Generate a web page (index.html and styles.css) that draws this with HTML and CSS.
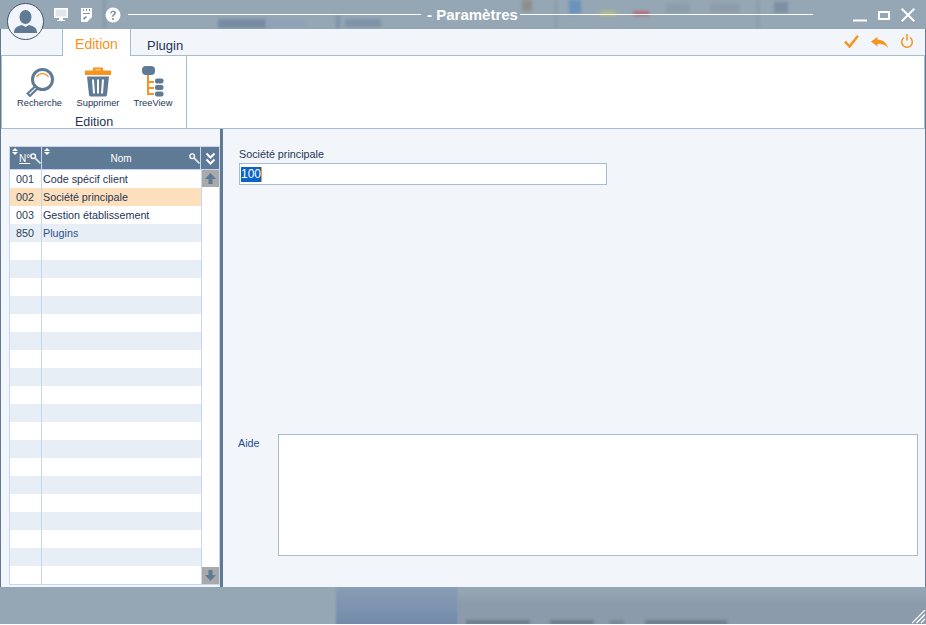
FILE: index.html
```html
<!DOCTYPE html>
<html lang="fr">
<head>
<meta charset="utf-8">
<title>Paramètres</title>
<link rel="stylesheet" href="styles.css">
</head>
<body>
<div class="backdrop">
  <span class="blur b1"></span><span class="blur b2"></span><span class="blur b3"></span><span class="blur b4"></span>
  <span class="blur b5"></span><span class="blur b6"></span><span class="blur b7"></span><span class="blur b8"></span>
  <span class="blur b9"></span><span class="blur b10"></span><span class="blur b11"></span><span class="blur b12"></span>
  <span class="blur b13"></span><span class="blur b14"></span><span class="blur b15"></span><span class="blur b16"></span>
  <span class="blur b17"></span><span class="blur b18"></span><span class="blur b19"></span><span class="blur b20"></span>
</div>
<div class="window">
  <header class="titlebar">
    <div class="avatar">
      <svg width="37" height="37" viewBox="0 0 37 37"><circle cx="18.500" cy="18.500" r="17.500" fill="#f1f5fb" stroke="#fff" stroke-width="1"/><circle cx="18.500" cy="18.500" r="18" fill="none" stroke="#3f566c" stroke-width="1"/><ellipse cx="18.500" cy="14" rx="6" ry="7" fill="#5f7a94"/><path d="M7 30c0-5 3-7 8-8l3.500 2 3.500-2c5 1 8 3 8 8z" fill="#5f7a94"/></svg>
    </div>
    <div class="quick">
      <svg width="16" height="16" viewBox="0 0 16 16"><path d="M1 1h14v10H1z" fill="#fff"/><path d="M2.500 2.500h11v7h-11z" fill="#dfe6ec"/><path d="M6 11h4v2h2v1H4v-1h2z" fill="#fff"/></svg>
      <svg width="12" height="16" viewBox="0 0 12 16"><path d="M0 1h11v9l-5 5H0z" fill="#fff"/><path d="M2 2h1v2H2zM5 2h1v2H5zM8 2h1v2H8zM2 6h7v1H2zM2 11l3-2 1 1-3 3z" fill="#7f93a6"/></svg>
      <svg width="16" height="16" viewBox="0 0 16 16"><circle cx="8" cy="8" r="7.500" fill="#fff"/><path d="M5.300 6.200C5.400 4.500 6.600 3.500 8.200 3.500c1.700 0 2.800 1 2.800 2.400 0 1.200-.8 1.800-1.500 2.300-.6.400-.8.700-.8 1.300v.3H7v-.5c0-1 .4-1.500 1.100-2 .6-.4.900-.7.900-1.200 0-.6-.4-1-1-1-.7 0-1 .4-1.100 1.100z" fill="#8a9cac"/><rect x="7" y="11" width="1.900" height="1.900" fill="#8a9cac"/></svg>
    </div>
    <div class="title-wrap">
      <span class="rule"></span>
      <span class="title">- Paramètres</span>
      <span class="rule"></span>
    </div>
    <div class="winctl">
      <svg width="14" height="14" viewBox="0 0 14 14"><path d="M0 12.500h14" stroke="#fff" stroke-width="2"/></svg>
      <svg width="12" height="14" viewBox="0 0 12 14"><path d="M1 4h10v7H1z" fill="none" stroke="#fff" stroke-width="2"/></svg>
      <svg width="14" height="14" viewBox="0 0 14 14"><path d="M.7.700l12.600 12.600M13.300.700L.7 13.300" stroke="#fff" stroke-width="2"/></svg>
    </div>
  </header>

  <div class="app">
    <nav class="tabs">
      <div class="tab tab-active">Edition</div>
      <div class="tab">Plugin</div>
      <div class="actions">
        <svg width="15" height="13" viewBox="0 0 15 13"><path d="M1 6.500l4.500 5L14 .8" fill="none" stroke="#f7931e" stroke-width="2.500"/></svg>
        <svg class="act-back" width="17" height="11" viewBox="0 0 17 11"><path d="M0 4.500L6.500 0v2.700c5 0 9 2.300 10.500 8.300-2.500-3.500-6-4.500-10.500-4.300V9.500z" fill="#f7931e"/></svg>
        <svg width="14" height="14" viewBox="0 0 14 14"><path d="M4 3.500a5.300 5.300 0 1 0 6 0" fill="none" stroke="#f7931e" stroke-width="1.500"/><path d="M7 0v6.500" stroke="#f7931e" stroke-width="1.500"/></svg>
      </div>
    </nav>

    <section class="ribbon">
      <div class="group">
        <div class="tools">
          <div class="tool">
            <svg width="29" height="31" viewBox="0 0 29 31"><circle cx="17.500" cy="13.500" r="10" fill="#fff" stroke="#5f7a94" stroke-width="3"/><path d="M11.500 11a7 7 0 0 1 12 0" fill="none" stroke="#f7931e" stroke-width="1.400"/><path d="M10 20.500L2.500 27.500l2.500 2.500 7.500-7.500z" fill="#e6ecf2" stroke="#5f7a94" stroke-width="2"/></svg>
            <span>Recherche</span>
          </div>
          <div class="tool tool-mid">
            <svg width="26" height="31" viewBox="0 0 26 31"><path d="M8 1.500h10v3h8v4.500H0V4.500h8z" fill="#f7931e"/><path d="M10.500 3h5v1.500h-5z" fill="#ffc680"/><path d="M2 10.500h22l-2 18.500a2 2 0 0 1-2 1.500H6a2 2 0 0 1-2-1.500z" fill="#5f7a94"/><path d="M8 13.500l1 14M13 13.500v14M18 13.500l-1 14" stroke="#fff" stroke-width="2"/></svg>
            <span>Supprimer</span>
          </div>
          <div class="tool tool-last">
            <svg width="24" height="31" viewBox="0 0 24 31"><rect x="1" y="0" width="13" height="9" rx="4" fill="#5f7a94"/><path d="M7 9v20M7 16h6M7 22h6M7 28h6" stroke="#f7931e" stroke-width="2" fill="none"/><rect x="14" y="12.500" width="8.500" height="5" rx="2" fill="#5f7a94"/><rect x="14" y="19" width="8.500" height="5" rx="2" fill="#5f7a94"/><rect x="14" y="25.500" width="8.500" height="5" rx="2" fill="#5f7a94"/></svg>
            <span>TreeView</span>
          </div>
        </div>
        <div class="group-label">Edition</div>
      </div>
    </section>

    <main class="content">
      <div class="list-panel">
        <div class="grid">
          <div class="grid-head">
            <div class="hd hd-code"><i class="sort"></i><span class="hd-n">N°</span><svg class="key" width="11" height="11" viewBox="0 0 11 11"><circle cx="3.200" cy="3.200" r="2.300" fill="none" stroke="#fff" stroke-width="1.400"/><path d="M5 5l5.500 5.500" stroke="#d9e0e7" stroke-width="1.800"/></svg></div>
            <div class="hd hd-name"><i class="sort"></i><span>Nom</span><svg class="key" width="11" height="11" viewBox="0 0 11 11"><circle cx="3.200" cy="3.200" r="2.300" fill="none" stroke="#fff" stroke-width="1.400"/><path d="M5 5l5.500 5.500" stroke="#d9e0e7" stroke-width="1.800"/></svg></div>
            <div class="hd hd-more"><svg width="11" height="13" viewBox="0 0 11 13"><path d="M1.500 1.500l4 4 4-4M1.500 7.500l4 4 4-4" fill="none" stroke="#fff" stroke-width="2"/></svg></div>
          </div>
          <div class="grid-body">
            <div class="rows">
              <div class="row"><span class="c1">001</span><span class="c2">Code spécif client</span></div>
              <div class="row row-sel"><span class="c1">002</span><span class="c2">Société principale</span></div>
              <div class="row"><span class="c1">003</span><span class="c2">Gestion établissement</span></div>
              <div class="row row-alt row-plugin"><span class="c1">850</span><span class="c2">Plugins</span></div>
              <div class="row"><span class="c1"></span><span class="c2"></span></div>
              <div class="row row-alt"><span class="c1"></span><span class="c2"></span></div>
              <div class="row"><span class="c1"></span><span class="c2"></span></div>
              <div class="row row-alt"><span class="c1"></span><span class="c2"></span></div>
              <div class="row"><span class="c1"></span><span class="c2"></span></div>
              <div class="row row-alt"><span class="c1"></span><span class="c2"></span></div>
              <div class="row"><span class="c1"></span><span class="c2"></span></div>
              <div class="row row-alt"><span class="c1"></span><span class="c2"></span></div>
              <div class="row"><span class="c1"></span><span class="c2"></span></div>
              <div class="row row-alt"><span class="c1"></span><span class="c2"></span></div>
              <div class="row"><span class="c1"></span><span class="c2"></span></div>
              <div class="row row-alt"><span class="c1"></span><span class="c2"></span></div>
              <div class="row"><span class="c1"></span><span class="c2"></span></div>
              <div class="row row-alt"><span class="c1"></span><span class="c2"></span></div>
              <div class="row"><span class="c1"></span><span class="c2"></span></div>
              <div class="row row-alt"><span class="c1"></span><span class="c2"></span></div>
              <div class="row"><span class="c1"></span><span class="c2"></span></div>
              <div class="row row-alt"><span class="c1"></span><span class="c2"></span></div>
              <div class="row"><span class="c1"></span><span class="c2"></span></div>
            </div>
            <div class="scroll">
              <div class="scroll-btn"><svg width="13" height="13" viewBox="0 0 13 13"><path d="M6.500 1L12 7H8.500v5h-4V7H1z" fill="#5f7a94"/></svg></div>
              <div class="scroll-btn"><svg width="13" height="13" viewBox="0 0 13 13"><path d="M6.500 12L12 6H8.500V1h-4v5H1z" fill="#5f7a94"/></svg></div>
            </div>
          </div>
        </div>
      </div>
      <div class="form">
        <div class="field">
          <label class="field-label" for="soc">Société principale</label>
          <div class="input"><span class="selected" id="soc">100</span></div>
        </div>
        <div class="help">
          <span class="help-label">Aide</span>
          <div class="help-box"></div>
        </div>
      </div>
    </main>
  </div>
  <svg class="grip" width="14" height="14" viewBox="0 0 14 14"><path d="M0 13L13 0M4.500 13L13 4.500M9 13l4-4" stroke="#fff" stroke-width="1.200"/></svg>
</div>
</body>
</html>
```
FILE: styles.css
```css
* { box-sizing: border-box; }
html, body { margin: 0; height: 100%; overflow: hidden; }
body { position: relative; width: 926px; height: 625px; background: #fff; font-family: "Liberation Sans", Arial, sans-serif; font-size: 11px; color: #1d3557; }
.backdrop { position: absolute; left: 0; top: 0; width: 926px; height: 624px; background: #95a6b4; overflow: hidden; }
.blur { position: absolute; filter: blur(1.500px); }
.b1 { left: 336px; top: 585px; width: 122px; height: 41px; background: linear-gradient(#8a9fb6, #7289a9); filter: blur(1px); }
.b2 { left: 218px; top: 19px; width: 48px; height: 9px; background: #5f7896; opacity: .55; }
.b3 { left: 569px; top: 0; width: 12px; height: 14px; background: #6b93bd; }
.b4 { left: 600px; top: 11px; width: 16px; height: 5px; background: #b3bd85; }
.b5 { left: 633px; top: 11px; width: 16px; height: 5px; background: #b3707c; }
.b6 { left: 666px; top: 3px; width: 24px; height: 10px; background: #84929f; opacity: .4; }
.b7 { left: 774px; top: 2px; width: 14px; height: 11px; background: #73889d; opacity: .7; }
.b8 { left: 458px; top: 590px; width: 468px; height: 34px; background: linear-gradient(#95a6b4, #8b9bab 40%); filter: none; }
.b9 { left: 466px; top: 620px; width: 64px; height: 5px; background: #59636e; opacity: .5; }
.b10 { left: 550px; top: 620px; width: 44px; height: 5px; background: #59636e; opacity: .5; }
.b11 { left: 610px; top: 620px; width: 14px; height: 5px; background: #6a7480; opacity: .5; }
.b12 { left: 645px; top: 620px; width: 82px; height: 5px; background: #59636e; opacity: .5; }
.b13 { left: 266px; top: 20px; width: 40px; height: 8px; background: #84a0c0; opacity: .4; }
.b14 { left: 336px; top: 15px; width: 4px; height: 14px; background: #7f93a8; }
.b15 { left: 345px; top: 19px; width: 36px; height: 8px; background: #7f93a8; }
.b16 { left: 103px; top: 0; width: 3px; height: 29px; background: #8799a8; }
.b17 { left: 710px; top: 3px; width: 30px; height: 10px; background: #84929f; opacity: .4; }
.b18 { left: 555px; top: 0; width: 2px; height: 29px; background: #8799a8; }
.b19 { left: 757px; top: 0; width: 2px; height: 29px; background: #8799a8; }
.b20 { left: 522px; top: 0; width: 10px; height: 11px; background: #8d8f8c; }

.window { position: relative; width: 926px; height: 587px; display: flex; flex-direction: column; }
.titlebar { position: relative; height: 29px; display: flex; align-items: center; padding-left: 53px; flex: none; }
.avatar { position: absolute; left: 7px; top: 3px; width: 37px; height: 37px; z-index: 2; }
.avatar svg { display: block; }
.quick { display: flex; gap: 12px; align-items: center; }
.quick svg { display: block; }
.title-wrap { position: absolute; left: 128px; top: 0; height: 29px; width: 685px; display: flex; align-items: center; }
.rule { flex: 1; height: 1px; background: #fff; }
.title { color: #fff; font-weight: 700; font-size: 15px; padding: 0 2px 0 6px; }
.winctl { position: absolute; left: 853px; top: 8px; display: flex; gap: 11px; align-items: flex-start; }
.winctl svg { display: block; }

.app { flex: 1; display: flex; flex-direction: column; background: #f2f5fa; border-left: 1px solid #5f7a94; border-right: 1px solid #5f7a94; min-height: 0; }
.tabs { height: 26px; display: flex; padding-left: 60px; position: relative; flex: none; }
.tab { font-size: 13px; color: #1d3557; padding: 9px 0 0 0; width: 69px; text-align: center; margin-left: 1px; }
.tab-active { font-size: 14px; color: #f7931e; background: #fff; border: 1px solid #a9bccd; border-bottom: 0; border-top: 0; padding-top: 7px; margin-bottom: -1px; z-index: 1; }
.tab-active + .tab { width: auto; padding-left: 15px; }
.actions { position: absolute; right: 11px; top: 5px; display: flex; gap: 12px; align-items: center; }
.actions svg { display: block; }
.act-back { margin-top: 2px; }

.ribbon { height: 74px; background: #fff; border: 1px solid #a9bccd; flex: none; display: flex; }
.group { width: 185px; border-right: 1px solid #a9bccd; display: flex; flex-direction: column; padding-top: 10px; align-items: center; }
.tools { display: flex; align-self: flex-start; padding-left: 8px; }
.tool { display: flex; flex-direction: column; align-items: center; width: 59px; font-size: 9.3px; color: #1d3557; }
.tool-mid { width: 58px; }
.tool-last { width: 52px; }
.tool svg { display: block; margin-bottom: 1px; }
.group-label { font-size: 12.5px; margin-top: 7px; color: #1d3557; }

.content { flex: 1; display: flex; min-height: 0; }
.list-panel { width: 222px; flex: none; border-right: 3px solid #5f7a94; padding: 17px 0 0 8px; background: #f2f5fa; }
.grid { width: 211px; height: 439px; border: 1px solid #c5d5f5; background: #fff; display: flex; flex-direction: column; }
.grid-head { height: 23px; display: flex; background: #c5d5f5; gap: 1px; flex: none; padding-bottom: 1px; }
.hd { position: relative; background: #5f7a94; color: #fff; display: flex; align-items: center; justify-content: center; font-size: 10px; height: 22px; }
.hd-code { width: 31px; justify-content: flex-start; padding-left: 9px; }
.hd-name { width: 159px; }
.hd-more { width: 18px; }
.hd-n { text-decoration: underline; }
.key { position: absolute; right: 0; top: 6px; }
.sort { position: absolute; left: 2px; top: 1px; width: 6px; height: 8px; }
.sort::before, .sort::after { content: ""; position: absolute; left: 0; border-left: 3px solid transparent; border-right: 3px solid transparent; }
.sort::before { top: 0; border-bottom: 3px solid #fff; }
.sort::after { top: 4px; border-top: 3px solid #fff; }
.grid-body { flex: 1; display: flex; min-height: 0; }
.rows { width: 191px; flex: none; display: flex; flex-direction: column; }
.row { height: 18px; display: flex; align-items: center; flex: none; background: #fff; font-size: 10.75px; line-height: 18px; color: #1d3557; }
.row-alt { background: #e7eef6; }
.row-sel { background: #ffe0bd; }
.row-plugin .c2 { color: #2f5288; }
.c1 { width: 32px; height: 18px; border-right: 1px solid #c5d5f5; text-align: center; flex: none; padding-right: 1px; color: #2b3f58; }
.c2 { padding-left: 1px; }
.scroll { flex: 1; border-left: 1px solid #c5d5f5; display: flex; flex-direction: column; justify-content: space-between; background: #fff; }
.scroll-btn { height: 17px; background: #a9a9a9; display: flex; align-items: center; justify-content: center; }
.scroll-btn svg { display: block; }

.form { flex: 1; position: relative; padding: 19px 0 0 16px; display: flex; flex-direction: column; }
.field-label { display: block; font-size: 10.75px; color: #1d3557; line-height: 13px; }
.input { margin-top: 2px; width: 368px; height: 22px; border: 1px solid #a9bccd; background: #fff; padding: 2px 0 0 1px; font-size: 12px; line-height: 16px; }
.selected { background: #0a64c8; color: #fff; display: inline-block; height: 15px; line-height: 15px; border-right: 1px solid #f7931e; }
.help { display: flex; margin-top: 249px; }
.help-label { width: 40px; margin-left: -1px; margin-top: 3px; font-size: 10.75px; color: #1d4f91; }
.help-box { width: 640px; height: 122px; background: #fff; border: 1px solid #a9bccd; }
.grip { position: absolute; right: 0; bottom: -37px; }
```
